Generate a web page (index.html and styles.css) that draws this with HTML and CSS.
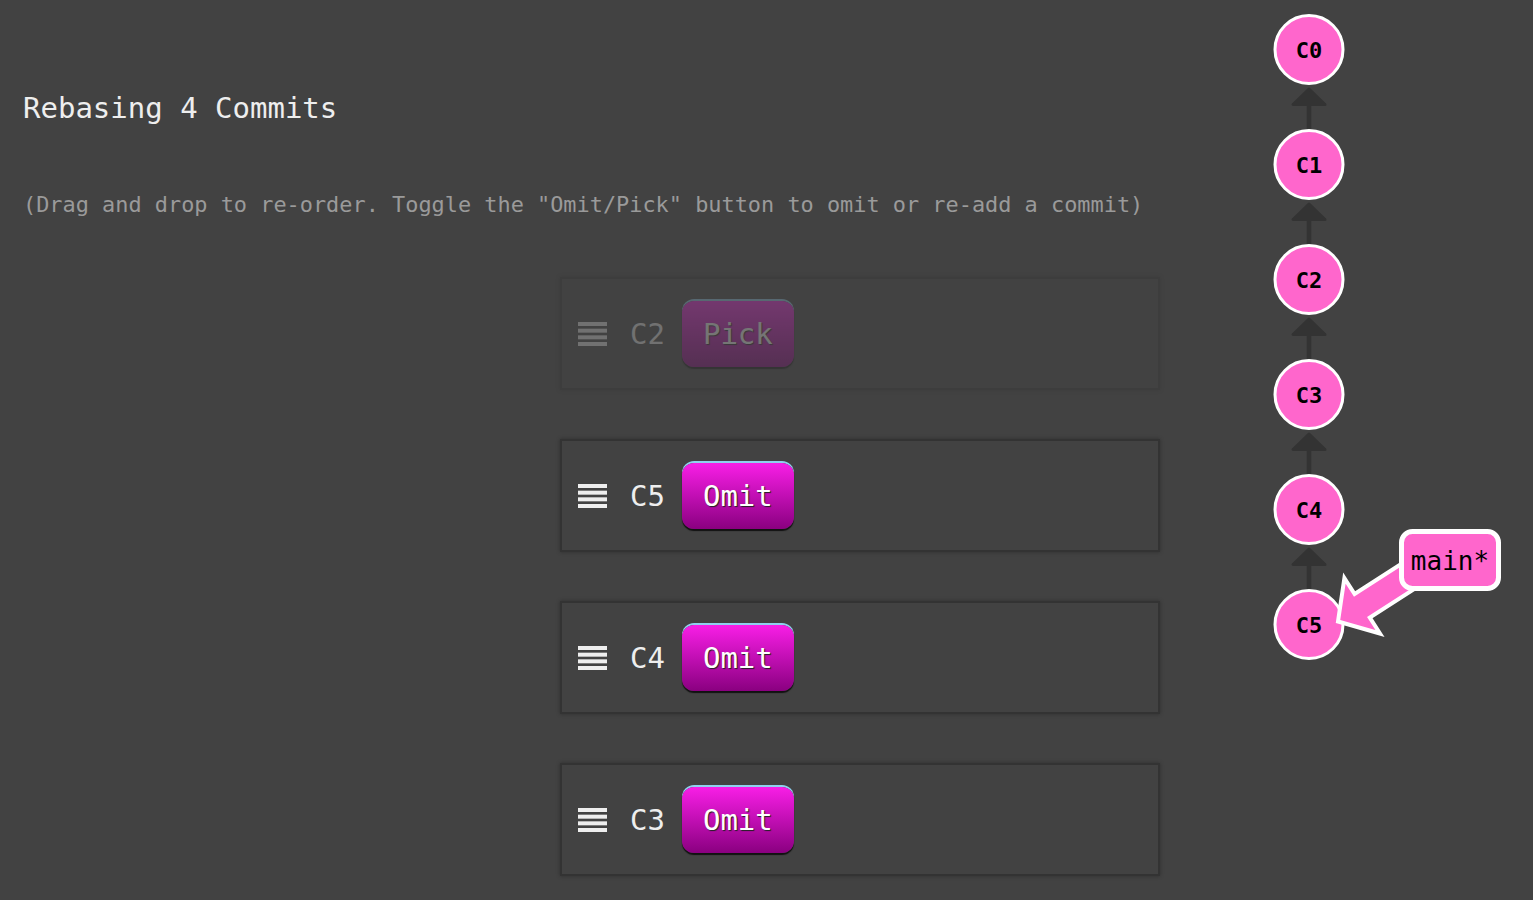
FILE: index.html
```html
<!DOCTYPE html>
<html lang="en">
<head>
<meta charset="utf-8">
<title>Rebasing 4 Commits</title>
<link rel="stylesheet" href="styles.css">
</head>
<body>
<div class="page">
  <main class="rebase">
    <h1 class="title">Rebasing 4 Commits</h1>
    <p class="hint">(Drag and drop to re-order. Toggle the "Omit/Pick" button to omit or re-add a commit)</p>
    <ul class="commit-list">
      <li class="commit commit--omitted">
        <svg class="grip" width="29" height="24" viewBox="0 0 29 24"><rect y="0" width="29" height="4"/><rect y="6.67" width="29" height="4"/><rect y="13.33" width="29" height="4"/><rect y="20" width="29" height="4"/></svg>
        <span class="commit-id">C2</span>
        <button class="toggle">Pick</button>
      </li>
      <li class="commit">
        <svg class="grip" width="29" height="24" viewBox="0 0 29 24"><rect y="0" width="29" height="4"/><rect y="6.67" width="29" height="4"/><rect y="13.33" width="29" height="4"/><rect y="20" width="29" height="4"/></svg>
        <span class="commit-id">C5</span>
        <button class="toggle">Omit</button>
      </li>
      <li class="commit">
        <svg class="grip" width="29" height="24" viewBox="0 0 29 24"><rect y="0" width="29" height="4"/><rect y="6.67" width="29" height="4"/><rect y="13.33" width="29" height="4"/><rect y="20" width="29" height="4"/></svg>
        <span class="commit-id">C4</span>
        <button class="toggle">Omit</button>
      </li>
      <li class="commit">
        <svg class="grip" width="29" height="24" viewBox="0 0 29 24"><rect y="0" width="29" height="4"/><rect y="6.67" width="29" height="4"/><rect y="13.33" width="29" height="4"/><rect y="20" width="29" height="4"/></svg>
        <span class="commit-id">C3</span>
        <button class="toggle">Omit</button>
      </li>
    </ul>
  </main>
  <aside class="graph">
    <svg class="graph-svg" width="313" height="900" viewBox="0 0 313 900">
      <g class="edges">
        <line x1="89" y1="100" x2="89" y2="130"/>
        <polygon points="89,89 73,104.5 105,104.5"/>
        <line x1="89" y1="215" x2="89" y2="245"/>
        <polygon points="89,204 73,219.5 105,219.5"/>
        <line x1="89" y1="330" x2="89" y2="360"/>
        <polygon points="89,319 73,334.5 105,334.5"/>
        <line x1="89" y1="445" x2="89" y2="475"/>
        <polygon points="89,434 73,449.5 105,449.5"/>
        <line x1="89" y1="560" x2="89" y2="590"/>
        <polygon points="89,549 73,564.5 105,564.5"/>
      </g>
      <g class="nodes">
        <circle cx="89" cy="49.5" r="34"/><text x="89" y="58">C0</text>
        <circle cx="89" cy="164.5" r="34"/><text x="89" y="173">C1</text>
        <circle cx="89" cy="279.5" r="34"/><text x="89" y="288">C2</text>
        <circle cx="89" cy="394.5" r="34"/><text x="89" y="403">C3</text>
        <circle cx="89" cy="509.5" r="34"/><text x="89" y="518">C4</text>
        <circle cx="89" cy="624.5" r="34"/><text x="89" y="633">C5</text>
      </g>
      <g class="branch">
        <polygon class="branch-arrow" points="118,621.5 124.4,578.1 134.6,594 185,561.6 200.2,585.2 149.8,617.6 160,633.5"/>
        <rect class="branch-box" x="181.5" y="531.5" width="97" height="57" rx="11"/>
        <text class="branch-name" x="230" y="569.5">main*</text>
      </g>
    </svg>
  </aside>
</div>
</body>
</html>
```
FILE: styles.css
```css
html, body {
  margin: 0;
  padding: 0;
  background: #424242;
}

body {
  font-family: "DejaVu Sans Mono", "Liberation Mono", monospace;
  color: #eee;
}

.page {
  display: flex;
  height: 900px;
  overflow: hidden;
}

.rebase {
  flex: 1;
  padding: 91px 0 0 23px;
}

.title {
  margin: 0;
  font-size: 29px;
  line-height: 34px;
  font-weight: normal;
  color: #eee;
}

.hint {
  margin: 67px 0 0;
  font-size: 21.9px;
  line-height: 26px;
  color: #9a9a9a;
}

.commit-list {
  list-style: none;
  margin: 59px 0 0 537px;
  padding: 0;
  display: flex;
  flex-direction: column;
  gap: 49px;
}

.commit {
  width: 600px;
  height: 113px;
  box-sizing: border-box;
  border: 2px solid #333;
  box-shadow: 0 0 4px rgba(0, 0, 0, 0.3);
  display: flex;
  align-items: center;
  padding-left: 16px;
}

.commit--omitted {
  opacity: 0.27;
}

.grip {
  display: block;
  fill: #eee;
}

.commit-id {
  margin-left: 23px;
  font-size: 29px;
  line-height: 34px;
  color: #eee;
}

.toggle {
  margin-left: 17px;
  height: 66px;
  padding: 0 21px;
  border: none;
  border-radius: 12px;
  font-family: "DejaVu Sans Mono", "Liberation Mono", monospace;
  font-size: 29px;
  color: #fff;
  text-shadow: 1px 1px 1px #222;
  background: linear-gradient(#f81ee6, #8a0080);
  box-shadow: 0 -2px 0 #8fd0ee, 0 2px 1px #111;
  cursor: pointer;
}

.graph {
  width: 313px;
  flex: none;
}

.graph-svg {
  display: block;
}

.edges line {
  stroke: #333;
  stroke-width: 4.5;
}

.edges polygon {
  fill: #333;
  stroke: #333;
  stroke-width: 3;
  stroke-linejoin: round;
}

.nodes circle {
  fill: #ff66cc;
  stroke: #fff;
  stroke-width: 3;
}

.nodes text {
  font-family: "DejaVu Sans Mono", monospace;
  font-weight: bold;
  font-size: 22px;
  fill: #000;
  text-anchor: middle;
}

.branch-arrow {
  fill: #ff66cc;
  stroke: #fff;
  stroke-width: 4;
  stroke-linejoin: miter;
}

.branch-box {
  fill: #ff66cc;
  stroke: #fff;
  stroke-width: 5;
}

.branch-name {
  font-family: "DejaVu Sans Mono", monospace;
  font-size: 26px;
  fill: #000;
  text-anchor: middle;
}
```
